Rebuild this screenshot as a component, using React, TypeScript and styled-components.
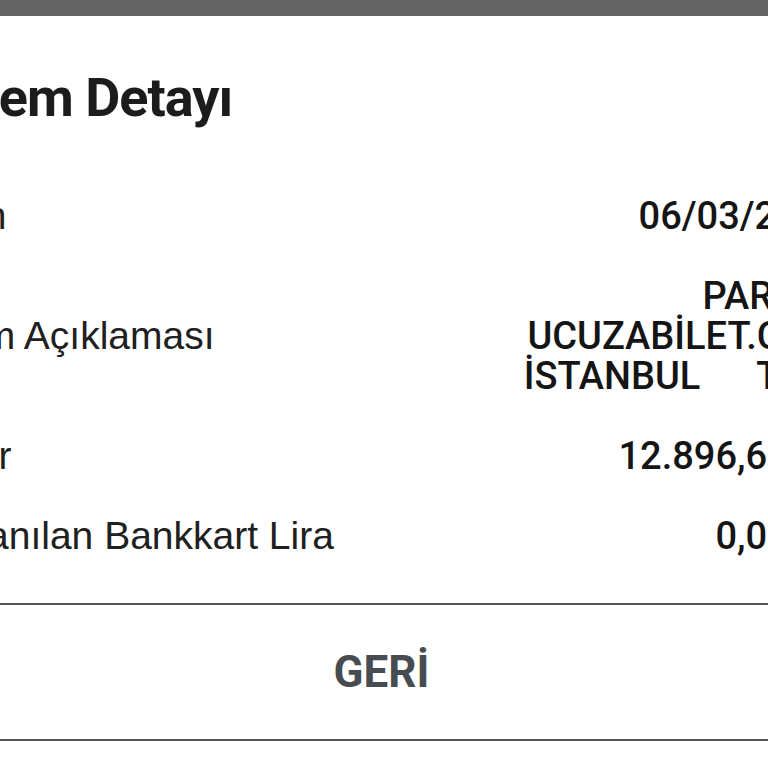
import React from 'react'
import styled, { createGlobalStyle } from 'styled-components'

interface DetailRow {
  label: string
  value: string[]
}

// descriptor lines keep the bank's fixed-width spacing
const ROWS: DetailRow[] = [
  { label: 'Tarih', value: ['06/03/2023'] },
  {
    label: 'İşlem Açıklaması',
    value: ['PARAM ', 'UCUZABİLET.COM', 'İSTANBUL      TR    '],
  },
  { label: 'Tutar', value: ['12.896,60 TL'] },
  { label: 'Kullanılan Bankkart Lira', value: ['0,00 TL'] },
]

const App: React.FC = () => {
  return (
    <Screen>
      <GlobalStyle />
      <Backdrop />
      <Sheet>
        <Title>İşlem Detayı</Title>
        <Details>
          {ROWS.map((row, i) => (
            <Row key={i}>
              <Label>{row.label}</Label>
              <Value>
                {row.value.map((line, j) => (
                  <ValueLine key={j}>{line}</ValueLine>
                ))}
              </Value>
            </Row>
          ))}
        </Details>
        <Footer>
          <BackButton type='button'>GERİ</BackButton>
        </Footer>
      </Sheet>
    </Screen>
  )
}

const GlobalStyle = createGlobalStyle`
  html, body {
    margin: 0;
    padding: 0;
    background: #fff;
  }
  body {
    font-family: Roboto, 'Liberation Sans', sans-serif;
    overflow: hidden;
  }
`

const Screen = styled.div`
  width: 768px;
  height: 768px;
  overflow: hidden;
  background: #fff;
  display: flex;
  flex-direction: column;
`

const Backdrop = styled.div`
  height: 16px;
  flex-shrink: 0;
  background: #646464;
`

const Sheet = styled.div`
  margin-left: -78px;
  width: 919px;
  padding-top: 55px;
  background: #fff;
  display: flex;
  flex-direction: column;
`

const Title = styled.h1`
  margin: 0 0 71px 22px;
  font-size: 54px;
  line-height: 54px;
  font-weight: 700;
  letter-spacing: -1px;
  color: #1c1c1c;
`

const Details = styled.div`
  display: flex;
  flex-direction: column;
  gap: 40px;
`

const Row = styled.div`
  display: flex;
  align-items: center;
  justify-content: space-between;
`

const Label = styled.span`
  font-family: 'Liberation Sans', Arial, sans-serif;
  font-size: 39px;
  line-height: 40px;
  color: #202020;
  white-space: nowrap;
`

const Value = styled.div`
  display: flex;
  flex-direction: column;
  align-items: flex-end;
`

const ValueLine = styled.span`
  font-size: 38px;
  line-height: 40px;
  font-weight: 500;
  color: #151515;
  white-space: pre;
`

const Footer = styled.div`
  margin-top: 47px;
  height: 134px;
  border-top: 2px solid #555;
  border-bottom: 2px solid #555;
  display: flex;
  align-items: center;
  justify-content: center;
`

const BackButton = styled.button`
  border: none;
  background: none;
  padding: 0;
  font-family: inherit;
  font-size: 44px;
  font-weight: 700;
  color: #474c51;
  cursor: pointer;
`

export default App
